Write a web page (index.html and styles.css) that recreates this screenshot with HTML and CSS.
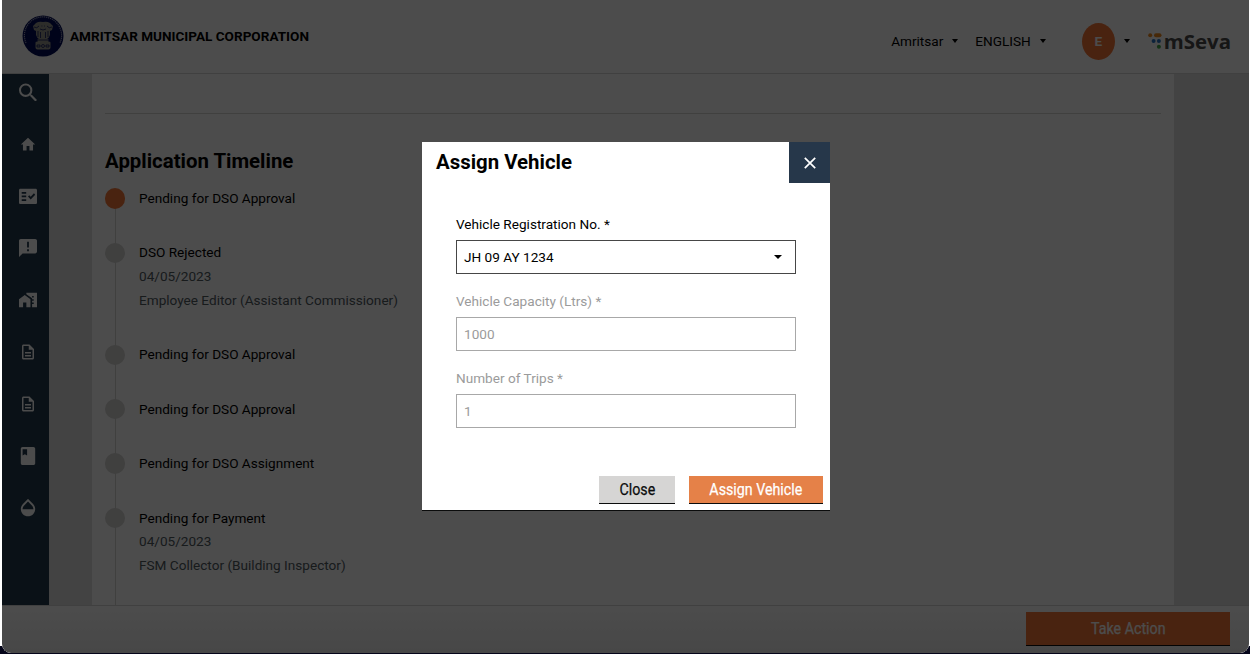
FILE: index.html
```html
<!DOCTYPE html>
<html lang="en">
<head>
<meta charset="utf-8">
<title>mSeva</title>
<link rel="stylesheet" href="styles.css">
</head>
<body>
<div class="window">
  <header class="topbar">
    <svg class="emblem" viewBox="0 0 42 42">
      <circle cx="21" cy="21" r="20.500" fill="#020c58"/>
      <path d="M4 28A18.600 18.600 0 1 1 38 28" fill="none" stroke="#9a9cb8" stroke-width="1.200" stroke-dasharray="1.200 .8"/>
      <g fill="#96968e">
        <path d="M14 8q3-2 7-1 4-1 7 1l3 3-1 4-2 1v4q-1 3-3 4h-8q-2-1-3-4v-4l-2-1-1-4z"/>
        <path d="M15.500 24h11v3h-11zM13.500 27.500q0-1 2-1h11q2 0 2 1v5q0 2-2 2h-11q-2 0-2-2z"/>
      </g>
      <g fill="none" stroke="#020c58" stroke-width=".7">
        <path d="M12 12q3 2 5-1M30 12q-3 2-5-1M18 14q3 2 6 0M16 16v6M18.500 17v6M23.500 17v6M26 16v6M19.500 11h.8M22 11h.8M15 25h12"/>
        <path d="M15 30h3v2h-3zM24 30h3v2h-3z"/><circle cx="21" cy="31" r="1.500"/>
      </g>
    </svg>
    <h1 class="corp">AMRITSAR MUNICIPAL CORPORATION</h1>
    <nav class="tools">
      <span class="tool city">Amritsar<i class="caret"></i></span>
      <span class="tool lang">ENGLISH<i class="caret"></i></span>
      <span class="avatar">E</span><i class="caret avatar-caret"></i>
      <span class="brand">
        <svg class="brand-dots" width="14" height="17" viewBox="0 0 14 17">
          <circle cx="2.200" cy="2.300" r="2" fill="#ef8a20"/><rect x="6" y=".3" width="7.500" height="4" rx="2" fill="#ef8a20"/>
          <circle cx="5.600" cy="8" r="2" fill="#2873c4"/><circle cx="10.900" cy="8" r="2" fill="#2873c4"/>
          <circle cx="10.900" cy="13.700" r="2" fill="#43a847"/>
        </svg>
        <span class="brand-name">mSeva</span>
      </span>
    </nav>
  </header>
  <div class="middle">
    <aside class="sidebar">
      <svg class="ico search" viewBox="3 2.500 17.500 17.500"><path d="M15.500 14h-.79l-.28-.27A6.470 6.470 0 0 0 16 9.500 6.500 6.500 0 1 0 9.500 16c1.610 0 3.090-.59 4.230-1.570l.27.28v.79l5 4.990L20.490 19l-4.990-5zm-6 0C7.010 14 5 11.990 5 9.500S7.010 5 9.500 5 14 7.010 14 9.500 11.990 14 9.500 14z"/></svg>
      <svg class="ico" viewBox="0 0 20 20"><path d="M8 17v-6h4v6h5V9h3L10 0 0 9h3v8z" transform="translate(2 3) scale(.8 .83)"/></svg>
      <svg class="ico" viewBox="0 -.5 20 20"><path fill-rule="evenodd" d="M18.500 1.500h-17C.7 1.500 0 2.200 0 3v14c0 .8.700 1.500 1.500 1.500h17c.8 0 1.500-.7 1.500-1.500V3c0-.8-.7-1.500-1.500-1.500zM8 15H3v-2h5zm0-4H3V9h5zm0-4H3V5h5zm5 6.500L10 10l1.400-1.400L13 10.200 16.600 6.500 18 8z"/></svg>
      <svg class="ico" viewBox="0 0 20 20"><path fill-rule="evenodd" d="M18 0H2C.9 0 0 .9 0 2v18l4-4h14c1.100 0 2-.9 2-2V2c0-1.100-.9-2-2-2zm-7 13.500H9v-2h2zm0-4H9v-6.500h2z"/></svg>
      <svg class="ico" viewBox="1 3 22 18"><path fill-rule="evenodd" d="M1 11v10h5v-6h4v6h5V11L8 6zM10 3v1.970l7 5V11h2v2h-2v2h2v2h-2v4h6V3zm9 6h-2V7h2z"/></svg>
      <svg class="ico" viewBox="0 0 24 24"><path d="M8 16h8v2H8zm0-4h8v2H8zm6-10H6c-1.100 0-2 .9-2 2v16c0 1.100.890 2 1.990 2H18c1.100 0 2-.9 2-2V8zm4 18H6V4h7v5h5z"/></svg>
      <svg class="ico" viewBox="0 0 24 24"><path d="M8 16h8v2H8zm0-4h8v2H8zm6-10H6c-1.100 0-2 .9-2 2v16c0 1.100.890 2 1.990 2H18c1.100 0 2-.9 2-2V8zm4 18H6V4h7v5h5z"/></svg>
      <svg class="ico" viewBox="2 2 20 20"><path fill-rule="evenodd" d="M18 2H6c-1.100 0-2 .9-2 2v16c0 1.100.9 2 2 2h12c1.100 0 2-.9 2-2V4c0-1.100-.9-2-2-2zM6 4.500h5v7L8.500 10 6 11.500z"/></svg>
      <svg class="ico" viewBox="2 2.500 20 20"><path d="M17.660 8 12 2.350 6.340 8C4.780 9.560 4 11.640 4 13.640s.78 4.110 2.340 5.670 3.610 2.350 5.660 2.350 4.100-.79 5.660-2.350S20 15.640 20 13.640 19.220 9.560 17.660 8zM6 14c.010-2 .62-3.270 1.760-4.400L12 5.270l4.240 4.380C17.380 10.770 17.990 12 18 14z"/></svg>
    </aside>
    <main class="card">
      <hr class="rule">
      <h2 class="heading">Application Timeline</h2>
      <ol class="timeline">
        <li class="step current"><p>Pending for DSO Approval</p></li>
        <li class="step"><p>DSO Rejected</p><p class="note">04/05/2023</p><p class="note">Employee Editor (Assistant Commissioner)</p></li>
        <li class="step"><p>Pending for DSO Approval</p></li>
        <li class="step"><p>Pending for DSO Approval</p></li>
        <li class="step"><p>Pending for DSO Assignment</p></li>
        <li class="step"><p>Pending for Payment</p><p class="note">04/05/2023</p><p class="note">FSM Collector (Building Inspector)</p></li>
      </ol>
    </main>
  </div>
  <footer class="actionbar"><button class="btn take"><span class="narrow">Take Action</span></button></footer>
</div>
<div class="overlay">
  <section class="modal">
    <div class="modal-head">
      <h2 class="heading">Assign Vehicle</h2>
      <button class="close"><svg width="12" height="12" viewBox="0 0 12 12"><path d="M.8.8l10.400 10.400M11.200.8.8 11.200" stroke="#fff" stroke-width="1.700"/></svg></button>
    </div>
    <div class="form">
      <div class="label">Vehicle Registration No. *</div>
      <div class="field">JH 09 AY 1234<i class="caret"></i></div>
      <div class="label off">Vehicle Capacity (Ltrs) *</div>
      <div class="field off">1000</div>
      <div class="label off">Number of Trips *</div>
      <div class="field off">1</div>
    </div>
    <div class="modal-foot">
      <button class="btn grey"><span class="narrow">Close</span></button>
      <button class="btn assign"><span class="narrow">Assign Vehicle</span></button>
    </div>
  </section>
</div>
</body>
</html>
```

FILE: styles.css
```css
* { box-sizing: border-box; margin: 0; padding: 0; }
body { width: 1250px; height: 654px; overflow: hidden; padding: 0 1px 0 2px; font-family: Roboto, "Liberation Sans", sans-serif; font-size: 13.6px; color: #000; background: linear-gradient(#fff 646px, #05051a 646px); }
.window { height: 653px; display: flex; flex-direction: column; background: #fff; border-radius: 0 0 9px 9px; overflow: hidden; }
.topbar { height: 74px; flex: none; display: flex; align-items: flex-start; padding-left: 20px; border-bottom: 1px solid #d5d5d5; }
.emblem { width: 42px; height: 42px; margin-top: 15px; }
.corp { font-size: 13.550px; line-height: 20px; margin: 26px 0 0 6px; white-space: nowrap; }
.tools { margin-left: auto; display: flex; align-items: center; height: 82px; padding-right: 18px; }
.tool { display: flex; align-items: center; }
.lang { margin-left: 17px; }
.caret { width: 0; height: 0; border: 3.500px solid transparent; border-top: 4px solid #000; border-bottom: 0; }
.tool .caret { margin-left: 9px; }
.avatar { width: 33px; height: 37px; margin-left: 36px; border-radius: 50%; background: #f47738; color: #fff; font-weight: 700; display: flex; align-items: center; justify-content: center; }
.avatar-caret { margin-left: 9px; }
.brand { display: flex; align-items: center; margin-left: 18px; }
.brand-name { font: 700 20.400px/24px "Open Sans", sans-serif; color: #4a4a4a; margin-left: 2px; }
.middle { height: 531px; flex: none; display: flex; background: #e1e1e1; overflow: hidden; }
.sidebar { width: 47px; background: #22394d; display: flex; flex-direction: column; align-items: center; padding: 9px 0 0 4px; gap: 34px; }
.ico { width: 18px; height: 18px; fill: #fff; flex: none; }
.card { width: 1082px; margin-left: 43px; padding: 39px 13px 0; background: #fff; }
.rule { border: 0; height: 1px; background: #d6d5d4; }
.heading { font-size: 20.400px; line-height: 26px; font-weight: 700; }
.card .heading { margin: 34px 0 13px; }
.timeline { list-style: none; }
.step { position: relative; min-height: 54.400px; padding: 0 0 30.600px 34px; line-height: 23.800px; }
.step::before { content: ""; position: absolute; left: 10px; top: 12px; width: 1px; height: 100%; background: #d6d5d4; }
.step::after { content: ""; position: absolute; left: 0; top: 1.300px; width: 20.400px; height: 20.400px; border-radius: 50%; background: #d6d5d4; }
.current::after { background: #f47738; }
.note { color: #505a5f; }
.actionbar { flex: 1; display: flex; justify-content: flex-end; padding: 8px 19px 0 0; border-top: 1px solid #d8d8d8; background: linear-gradient(#fff, #eee); }
.btn { border: 0; border-bottom: 1px solid #0b0c0c; font: 16.200px/20px Roboto, sans-serif; display: flex; align-items: center; justify-content: center; }
.narrow { white-space: nowrap; transform: scaleX(.88); -webkit-text-stroke: .25px; }
.take { width: 204px; height: 34px; margin-top: -2px; background: #f47738; color: #fff; }
.overlay { position: fixed; inset: 0 1px 1px 2px; padding: 142px 0 0 420px; background: rgba(0, 0, 0, .7); border-radius: 0 0 9px 9px; }
.modal { width: 408px; height: 369px; background: #fff; border-bottom: 1px solid #0b0c0c; display: flex; flex-direction: column; }
.modal-head { display: flex; justify-content: space-between; padding: 0 0 0 14px; height: 41px; }
.modal-head .heading { margin-top: 7px; }
.close { width: 41px; height: 41px; border: 0; background: #26374a; display: flex; align-items: center; justify-content: center; }
.form { padding: 30px 34px 0; }
.label { height: 27px; line-height: 22px; }
.field { height: 34px; border: 1px solid #464646; padding: 0 13px 1px 7px; margin-bottom: 16.200px; display: flex; align-items: center; justify-content: space-between; }
.field .caret { border-width: 4.500px 4.500px 0; margin-top: 1px; }
.label.off, .field.off { color: #9b9b9b; }
.field.off { border-color: #a8a8a8; }
.modal-foot { display: flex; justify-content: flex-end; gap: 14px; padding-right: 7px; margin: auto 0 6px; }
.modal-foot .btn { height: 28px; }
.grey { width: 76px; background: #d6d5d4; color: #0b0c0c; }
.assign { width: 134px; background: #e58148; color: #fff; }
```
